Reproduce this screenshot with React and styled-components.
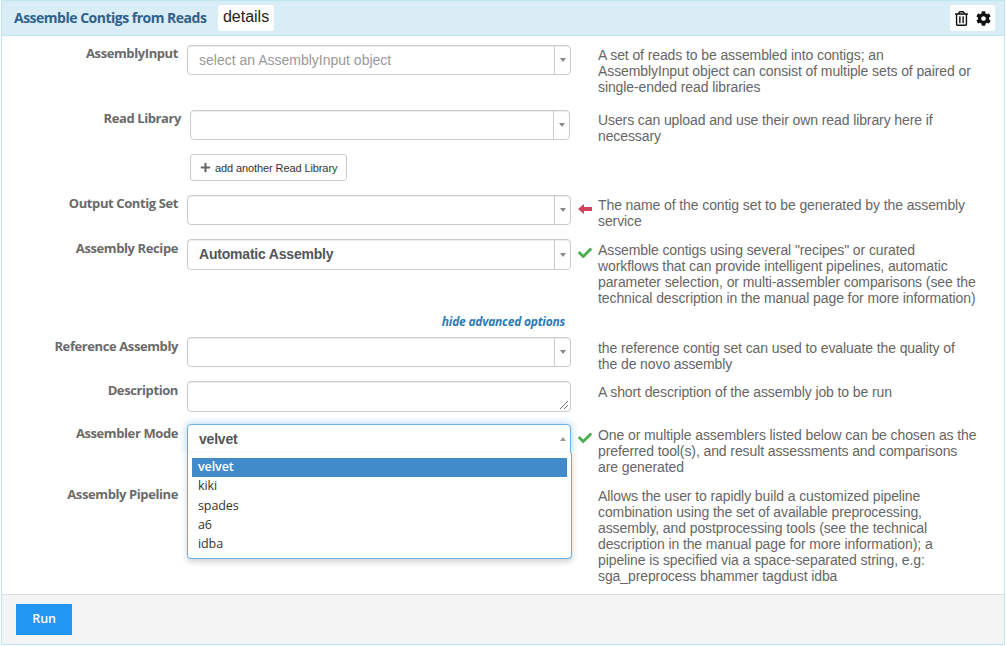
import React from 'react';
import styled, { createGlobalStyle } from 'styled-components';
import { FaRegTrashAlt, FaCog, FaPlus, FaCheck } from 'react-icons/fa';

const Global = createGlobalStyle`
  html, body { margin: 0; padding: 0; background: #fff; }
  body { font-family: "Liberation Sans", Arial, sans-serif; }
`;

const Panel = styled.div`
  width: 1004px;
  height: 645px;
  border: 1px solid #bce8f1;
  box-sizing: border-box;
  margin-left: 1px;
  display: flex;
  flex-direction: column;
`;

const Header = styled.div`
  height: 34px;
  background: #d9edf7;
  border-bottom: 1px solid #bce8f1;
  display: flex;
  align-items: center;
  padding: 0 9px 0 12px;
  flex: none;
`;

const Title = styled.span`
  font-family: "Open Sans", sans-serif;
  font-weight: 700;
  font-size: 14px;
  letter-spacing: -0.5px;
  color: #2e618d;
  margin-bottom: 2px;
`;

const Details = styled.span`
  background: #fff;
  border-radius: 2px;
  color: #222;
  font-size: 16px;
  line-height: 24px;
  padding: 0 4.5px 2px;
  margin-left: 12px;
`;

const Tools = styled.div`
  margin-left: auto;
  display: flex;
  background: #fff;
  border-radius: 2px;
  height: 26px;
  width: 45px;
  align-items: center;
  justify-content: center;
  gap: 7px;
  color: #111;
`;

const Body = styled.div`
  flex: 1;
  padding-top: 9px;
  position: relative;
`;

const Row = styled.div`
  display: grid;
  grid-template-columns: 177px 392px 27px 1fr;
  height: ${p => p.$h}px;
`;

const Label = styled.div`
  font-family: "Open Sans", sans-serif;
  font-weight: 700;
  font-size: 13px;
  letter-spacing: -0.4px;
  line-height: 18px;
  color: #6a6a6a;
  text-align: right;
  padding-right: 1px;
  margin-top: ${p => p.$top || 0}px;
  margin-right: ${p => p.$out ? -p.$out : 0}px;
`;

const FieldCell = styled.div`
  margin-left: ${p => p.$indent ? 11 : 8}px;
  margin-right: ${p => p.$indent ? 1 : 0}px;
  position: relative;
`;

const SelectBox = styled.div`
  height: ${p => p.$h || 30}px;
  box-sizing: border-box;
  border: 1px solid ${p => p.$open ? '#66afe9' : '#ccc'};
  border-radius: 4px;
  background: #fff;
  display: flex;
  align-items: center;
  font-size: 14px;
  ${p => p.$open ? `
    border-bottom-left-radius: 0;
    border-bottom-right-radius: 0;
    box-shadow: 0 0 8px rgba(102, 175, 233, 0.6);
  ` : 'box-shadow: inset 0 1px 1px rgba(0, 0, 0, 0.075);'}
`;

const SelectText = styled.span`
  flex: 1;
  padding-left: 11px;
  color: ${p => p.$placeholder ? '#999' : '#555'};
  font-weight: ${p => p.$placeholder ? 400 : 700};
  letter-spacing: ${p => p.$placeholder ? 0 : -0.2}px;
  margin-bottom: ${p => p.$lift || 0}px;
`;

const Arrow = styled.span`
  width: 15px;
  align-self: stretch;
  display: flex;
  align-items: center;
  justify-content: center;
  border-left: 1px solid ${p => p.$open ? 'transparent' : '#ccc'};
  &::after {
    content: "";
    border-left: 3px solid transparent;
    border-right: 3px solid transparent;
    ${p => p.$open ? 'border-bottom: 4px solid #999;' : 'border-top: 4px solid #888;'}
  }
`;

const TextBox = styled.div`
  height: 31px;
  box-sizing: border-box;
  border: 1px solid #ccc;
  border-radius: 4px;
  position: relative;
  box-shadow: inset 0 1px 1px rgba(0, 0, 0, 0.075);
`;

const Grip = styled.svg`
  position: absolute;
  right: 1px;
  bottom: 1px;
`;

const Status = styled.div`
  display: flex;
  justify-content: center;
  padding-top: ${p => p.$top ?? 7}px;
  color: ${p => p.$bad ? '#d2435a' : '#4cae4c'};
  font-size: 14px;
`;

const Doc = styled.div`
  font-size: 14px;
  line-height: 16px;
  letter-spacing: -0.1px;
  color: #666;
  padding-top: ${p => p.$top ?? 2}px;
  width: ${p => p.$w || 380}px;
`;

const AddButton = styled.button`
  height: 27px;
  width: 157px;
  box-sizing: border-box;
  border: 1px solid #ccc;
  border-radius: 3px;
  background: #fff;
  font-family: "Liberation Sans", Arial, sans-serif;
  font-size: 11px;
  letter-spacing: -0.1px;
  color: #333;
  display: flex;
  align-items: center;
  gap: 4px;
  padding: 0 0 0 9px;
  white-space: nowrap;
  svg { color: #666; font-size: 11px; }
`;

const AdvancedRow = styled.div`
  height: 44px;
  width: 563px;
  text-align: right;
  font-family: "Open Sans", sans-serif;
  font-weight: 700;
  font-style: italic;
  font-size: 12px;
  letter-spacing: -0.22px;
  color: #2a7ab8;
  padding-top: 21px;
  box-sizing: border-box;
  line-height: 16px;
`;

const Menu = styled.ul`
  position: absolute;
  top: 29px;
  left: 0;
  right: -1px;
  height: 106px;
  box-sizing: border-box;
  margin: 0;
  padding: 5px 4px 0;
  list-style: none;
  background: #fff;
  border: 1px solid #66afe9;
  border-top: 0;
  border-radius: 0 0 4px 4px;
  box-shadow: 0 3px 6px rgba(0, 0, 0, 0.18);
  z-index: 2;
`;

const MenuItem = styled.li`
  height: 19.25px;
  line-height: 18px;
  padding-left: 6px;
  font-family: "Open Sans", sans-serif;
  font-size: 12.5px;
  letter-spacing: -0.1px;
  color: ${p => p.$active ? '#fff' : '#333'};
  background: ${p => p.$active ? '#428bca' : 'transparent'};
  font-weight: ${p => p.$active ? 600 : 400};
`;

const Footer = styled.div`
  height: 50px;
  flex: none;
  box-sizing: border-box;
  background: #f4f4f4;
  border-top: 1px solid #ddd;
  padding: 9px 0 0 14px;
`;

const RunButton = styled.button`
  width: 56px;
  height: 31px;
  border: 0;
  background: #2196f3;
  color: #fff;
  font-family: "Open Sans", sans-serif;
  font-weight: 600;
  font-size: 12.5px;
  letter-spacing: -0.2px;
  padding: 0 0 2px;
`;

const Select = ({ text, placeholder }) => (
  <SelectBox>
    <SelectText $placeholder={placeholder}>{text}</SelectText>
    <Arrow />
  </SelectBox>
);

const BadArrow = () => (
  <svg width="14" height="10" viewBox="0 0 14 10">
    <path d="M0 5 L6 0 V3 H14 V7 H6 V10 Z" fill="currentColor" />
  </svg>
);

const modes = ['velvet', 'kiki', 'spades', 'a6', 'idba'];

export default function App() {
  return (
    <Panel>
      <Global />
      <Header>
        <Title>Assemble Contigs from Reads</Title>
        <Details>details</Details>
        <Tools>
          <FaRegTrashAlt size={15} />
          <FaCog size={15} />
        </Tools>
      </Header>
      <Body>
        <Row $h={65}>
          <Label $top={-1}>AssemblyInput</Label>
          <FieldCell><Select placeholder text="select an AssemblyInput object" /></FieldCell>
          <div />
          <Doc $w={373}>A set of reads to be assembled into contigs; an AssemblyInput object can consist of multiple sets of paired or single-ended read libraries</Doc>
        </Row>
        <Row $h={44}>
          <Label $top={-1} $out={3}>Read Library</Label>
          <FieldCell $indent><Select /></FieldCell>
          <div />
          <Doc>Users can upload and use their own read library here if necessary</Doc>
        </Row>
        <Row $h={41}>
          <div />
          <FieldCell $indent><AddButton><FaPlus /> add another Read Library</AddButton></FieldCell>
        </Row>
        <Row $h={44}>
          <Label $top={-1}>Output Contig Set</Label>
          <FieldCell><Select /></FieldCell>
          <Status $bad $top={9}><BadArrow /></Status>
          <Doc>The name of the contig set to be generated by the assembly service</Doc>
        </Row>
        <Row $h={54}>
          <Label>Assembly Recipe</Label>
          <FieldCell><SelectBox $h={31}><SelectText $lift={2}>Automatic Assembly</SelectText><Arrow /></SelectBox></FieldCell>
          <Status><FaCheck /></Status>
          <Doc $top={3}>Assemble contigs using several "recipes" or curated workflows that can provide intelligent pipelines, automatic parameter selection, or multi-assembler comparisons (see the technical description in the manual page for more information)</Doc>
        </Row>
        <AdvancedRow>hide advanced options</AdvancedRow>
        <Row $h={44}>
          <Label>Reference Assembly</Label>
          <FieldCell><Select /></FieldCell>
          <div />
          <Doc $top={3} $w={370}>the reference contig set can used to evaluate the quality of the de novo assembly</Doc>
        </Row>
        <Row $h={43}>
          <Label>Description</Label>
          <FieldCell>
            <TextBox>
              <Grip width="10" height="10" viewBox="0 0 10 10">
                <path d="M1 9 L9 1 M5 9 L9 5" stroke="#777" strokeWidth="1" fill="none" />
              </Grip>
            </TextBox>
          </FieldCell>
          <div />
          <Doc $top={3}>A short description of the assembly job to be run</Doc>
        </Row>
        <Row $h={61}>
          <Label>Assembler Mode</Label>
          <FieldCell>
            <SelectBox $open>
              <SelectText>velvet</SelectText>
              <Arrow $open />
            </SelectBox>
            <Menu>
              {modes.map((m, i) => <MenuItem key={m} $active={i === 0}>{m}</MenuItem>)}
            </Menu>
          </FieldCell>
          <Status><FaCheck /></Status>
          <Doc $top={3}>One or multiple assemblers listed below can be chosen as the preferred tool(s), and result assessments and comparisons are generated</Doc>
        </Row>
        <Row $h={100}>
          <Label>Assembly Pipeline</Label>
          <div />
          <div />
          <Doc $top={3}>Allows the user to rapidly build a customized pipeline combination using the set of available preprocessing, assembly, and postprocessing tools (see the technical description in the manual page for more information); a pipeline is specified via a space-separated string, e.g: sga_preprocess bhammer tagdust idba</Doc>
        </Row>
      </Body>
      <Footer>
        <RunButton>Run</RunButton>
      </Footer>
    </Panel>
  );
}
